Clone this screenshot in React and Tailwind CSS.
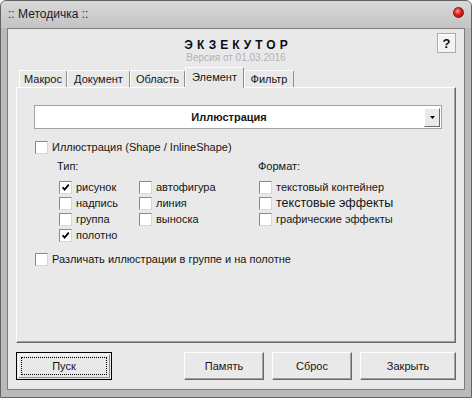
import React from "react";

function Box({ checked }) {
  return (
    <span className="flex h-[13px] w-[13px] shrink-0 items-center justify-center border border-t-[#8a8a8a] border-l-[#8a8a8a] border-r-[#d6d6d6] border-b-[#d6d6d6] bg-white">
      {checked && (
        <svg width="9" height="9" viewBox="0 0 9 9" className="-ml-px">
          <path d="M1.5 4.2 L3.6 6.6 L7.8 1.6" fill="none" stroke="#000" strokeWidth="1.7" />
        </svg>
      )}
    </span>
  );
}

function Check({ label, checked, big }) {
  return (
    <div className="flex h-[16px] items-center gap-[4px]">
      <Box checked={checked} />
      <span className={big ? "text-[12.5px] leading-none" : "text-[11px] leading-none"}>{label}</span>
    </div>
  );
}

function Tab({ label, width, active }) {
  if (active) {
    return (
      <div
        className={`relative z-10 -mb-px flex h-[21px] items-center justify-center rounded-t-[2px] border-l border-t border-r border-l-white border-t-white border-r-[#8e8e8e] bg-[#e9e9e9] pb-[2px] ${width}`}
      >
        {label}
      </div>
    );
  }
  return (
    <div
      className={`flex h-[17px] items-center justify-center rounded-t-[2px] border-l border-t border-r border-l-white border-t-white border-r-[#8e8e8e] bg-[#e9e9e9] ${width}`}
    >
      {label}
    </div>
  );
}

function Btn({ children, width, focused }) {
  if (focused) {
    return (
      <div className={`flex h-[28px] border border-black bg-[#e9e9e9] p-px ${width}`}>
        <div className="flex flex-1 border border-t-white border-l-white border-r-[#8e8e8e] border-b-[#8e8e8e] p-[2px]">
          <div className="flex flex-1 items-center justify-center border border-dotted border-black text-[11px]">
            {children}
          </div>
        </div>
      </div>
    );
  }
  return (
    <div
      className={`flex h-[28px] items-center justify-center border border-t-white border-l-white border-r-[#696969] border-b-[#696969] bg-[#e9e9e9] text-[11px] shadow-[inset_-1px_-1px_0_#a0a0a0] ${width}`}
    >
      {children}
    </div>
  );
}

export default function App() {
  return (
    <div className="flex h-[398px] w-[472px] flex-col overflow-hidden rounded-t-[6px] border border-[#636363] bg-[#bababa] font-['Liberation_Sans',Arial,sans-serif] text-[#151515]">
      <div className="flex h-[27px] shrink-0 items-start justify-between bg-gradient-to-b from-[#d9d9d9] to-[#c3c3c3] pl-[7px] pr-[7px]">
        <span className="mt-[6px] text-[12px] leading-[15px] text-[#1a1a2a]">:: Методичка ::</span>
        <span className="mt-[6px] h-[11px] w-[11px] rounded-full border border-[#8a1010] bg-[radial-gradient(circle_at_40%_35%,#ff9a9a_0%,#e02020_45%,#9a0808_100%)]" />
      </div>

      <div className="mx-[6px] mb-[7px] flex flex-1 flex-col border border-[#7c7c7c] bg-[#e9e9e9]">
        <div className="grid h-[38px] shrink-0 grid-cols-[1fr_auto_1fr]">
          <div />
          <div className="flex flex-col items-center pt-[10px]">
            <span className="pl-[4px] text-[12px] font-bold leading-[13px] tracking-[4px] text-[#0c0c18]">
              ЭКЗЕКУТОР
            </span>
            <span className="text-[10px] leading-[12px] text-[#b2b2b2]">Версия от 01.03.2016</span>
          </div>
          <div className="flex justify-end pr-[8px] pt-[4px]">
            <div className="flex h-[20px] w-[19px] items-center justify-center border border-[#a9a9a9] bg-[#f3f3f3] shadow-[inset_1px_1px_0_#ffffff] text-[13px] font-bold leading-none text-[#0a0a1a]">
              ?
            </div>
          </div>
        </div>

        <div className="flex h-[20px] shrink-0 items-end pl-[11px] text-[11px]">
          <Tab label="Макрос" width="w-[48px]" />
          <Tab label="Документ" width="w-[63px]" />
          <Tab label="Область" width="w-[55px]" />
          <Tab label="Элемент" width="w-[59px]" active />
          <Tab label="Фильтр" width="w-[50px]" />
        </div>

        <div className="mx-[8px] flex h-[256px] shrink-0 flex-col border border-t-white border-l-white border-r-[#696969] border-b-[#696969] shadow-[inset_-1px_-1px_0_#a0a0a0]">
          <div className="ml-[17px] mt-[17px] flex h-[24px] w-[408px] border border-[#a3a3a3] bg-white">
            <div className="flex flex-1 items-center justify-center text-[11px] font-bold">Иллюстрация</div>
            <div className="m-px mt-[2px] flex w-[16px] items-center justify-center border border-t-white border-l-white border-r-[#696969] border-b-[#696969] bg-[#e9e9e9]">
              <svg width="5" height="3" viewBox="0 0 5 3">
                <path d="M0 0 H5 L2.5 3 Z" fill="#000" />
              </svg>
            </div>
          </div>

          <div className="ml-[18px] mt-[10px]">
            <Check label="Иллюстрация (Shape / InlineShape)" />
          </div>

          <div className="ml-[40px] mt-[3px] flex">
            <div className="w-[201px]">
              <div className="flex h-[16px] items-center text-[11px]">Тип:</div>
              <div className="mt-[5px] grid grid-cols-[80px_auto] pl-[2px]">
                <Check label="рисунок" checked />
                <Check label="автофигура" />
                <Check label="надпись" />
                <Check label="линия" />
                <Check label="группа" />
                <Check label="выноска" />
                <Check label="полотно" checked />
              </div>
            </div>
            <div>
              <div className="flex h-[16px] items-center text-[11px]">Формат:</div>
              <div className="mt-[5px] flex flex-col pl-px">
                <Check label="текстовый контейнер" />
                <Check label="текстовые эффекты" big />
                <Check label="графические эффекты" />
              </div>
            </div>
          </div>

          <div className="ml-[18px] mt-[8px]">
            <Check label="Различать иллюстрации в группе и на полотне" />
          </div>
        </div>

        <div className="mx-[8px] mt-[9px] flex">
          <Btn width="w-[96px]" focused>
            Пуск
          </Btn>
          <div className="flex-1" />
          <div className="flex gap-[8px]">
            <Btn width="w-[80px]">Память</Btn>
            <Btn width="w-[80px]">Сброс</Btn>
            <Btn width="w-[96px]">Закрыть</Btn>
          </div>
        </div>
      </div>
    </div>
  );
}
